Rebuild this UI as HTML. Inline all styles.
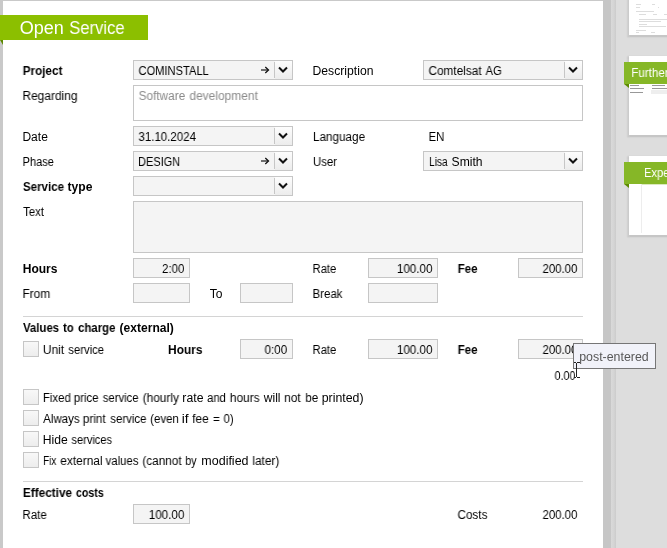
<!DOCTYPE html>
<html>
<head>
<meta charset="utf-8">
<title>Open Service</title>
<style>
html,body{margin:0;padding:0;}
body{width:667px;height:548px;overflow:hidden;position:relative;background:#dddddd;
 font-family:"Liberation Sans",sans-serif;font-size:12px;color:#000;}
.abs,.l,.f,.cb,.ta,.cmb,.line{position:absolute;}
.t{display:inline-block;white-space:nowrap;transform-origin:0 50%;will-change:transform;}
.t.r{transform-origin:100% 50%;}
#panel{position:absolute;left:3px;top:1px;width:600px;height:547px;background:#fff;}
#lstrip{position:absolute;left:0;top:0;width:3px;height:548px;background:#c9c9c9;}
#tstrip{position:absolute;left:0;top:0;width:603px;height:1px;background:#c9c9c9;}
#sb1{position:absolute;left:603px;top:0;width:8px;height:548px;background:#c6c6c6;}
#sb2{position:absolute;left:611px;top:0;width:5px;height:548px;background:linear-gradient(90deg,#d9d9d9,#d4d4d4 60%,#cbcbcb);}
#banner{position:absolute;left:0;top:15px;width:148px;height:25px;background:#8cbf00;}
#banner{line-height:27px;font-size:18px;color:#fff;padding-left:20px;box-sizing:border-box;white-space:nowrap;}
.l{height:20px;line-height:22px;white-space:nowrap;}
.b{font-weight:bold;color:#000;}
.f,.cmb,.ta{box-sizing:border-box;border:1px solid #c6c6c6;background:#f4f4f4;}
.f{height:20px;line-height:20px;text-align:right;padding-right:5px;}
.cmb{height:20px;line-height:20px;padding-left:5px;}
.cmb .sep{position:absolute;right:17px;top:1px;width:1px;height:16px;background:#c6c6c6;}
.cmb .btn{position:absolute;right:0;top:0;width:17px;height:18px;background:linear-gradient(#fdfdfd,#ececec);}
.cmb svg.ch{position:absolute;right:4px;top:5px;}
.cmb svg.ar{position:absolute;right:22px;top:5px;}
.ta{padding:2px 5px;line-height:16px;}
.cb{left:23px;width:16px;height:16px;box-sizing:border-box;border:1px solid #c6c6c6;background:linear-gradient(#f8f8f8,#ededed);}
.line{left:23px;width:560px;height:1px;background:#d4d4d4;}
.th{position:absolute;background:#fff;box-shadow:-1px 1px 1.5px 1.5px rgba(0,0,0,.1);}
.gb{position:absolute;left:624px;width:43px;height:22px;background:#86b727;color:#fff;line-height:22px;font-size:12.4px;white-space:nowrap;overflow:hidden;}
#further{margin-left:7px}#expe{margin-left:20px}
#tip{left:573px;top:343px;width:83px;height:26px;box-sizing:border-box;border:1px solid #767676;background:#f1f2f9;color:#575757;line-height:26px;padding-left:6px;white-space:nowrap;}
</style>
</head>
<body>
<div id="sb1"></div><div id="sb2"></div>
<div id="panel"></div>
<div id="lstrip"></div><div id="tstrip"></div>
<div id="banner"><span class="t" id="open0" style="transform:translateX(-0.31px) scaleX(1.0037)">Open</span> <span class="t" id="open1" style="transform:translateX(0.25px) scaleX(0.9223)">Service</span></div>
<svg class="abs" style="left:0;top:40px" width="3" height="5"><polygon points="0,0 3,0 3,5" fill="#5d8a00"/></svg>
<!-- right thumbnails -->
<div class="th" style="left:629px;top:-4px;width:42px;height:39px;"></div>
<svg class="abs" style="left:629px;top:0" width="38" height="35"><g fill="#9a9a9a" opacity=".33"><rect x="7" y="4" width="5" height="1"/><rect x="23" y="4" width="3" height="1"/><rect x="7" y="7" width="4" height="1"/><rect x="29" y="7" width="1" height="1"/><rect x="7" y="11" width="18" height="1"/><rect x="10" y="14" width="7" height="1"/><rect x="24" y="14" width="4" height="1"/><rect x="35" y="14" width="3" height="1"/><rect x="10" y="19" width="28" height="1"/><rect x="10" y="21" width="22" height="1"/><rect x="10" y="24" width="8" height="1"/><rect x="10" y="26" width="27" height="1"/><rect x="7" y="30" width="10" height="1"/><rect x="7" y="32" width="3" height="1"/><rect x="22" y="32" width="4" height="1"/></g></svg>
<div class="th" style="left:629px;top:56px;width:42px;height:79px;"></div>
<svg class="abs" style="left:629px;top:84px" width="38" height="12"><g fill="#555" opacity=".6"><rect x="1" y="1" width="9" height="1"/><rect x="23" y="1" width="13" height="1"/><rect x="1" y="4" width="14" height="1"/><rect x="23" y="4" width="15" height="1"/><rect x="1" y="8" width="13" height="1"/></g><rect x="22" y="6" width="16" height="4" fill="#eee"/></svg>
<div class="gb" style="top:62px;"><span class="t" id="further" style="transform:translateX(0.30px) scaleX(0.9350)">Further</span></div>
<svg class="abs" style="left:624px;top:84px" width="5" height="4"><polygon points="0,0 5,0 5,4" fill="#5d8a00"/></svg>
<div class="th" style="left:629px;top:156px;width:42px;height:79px;"></div>
<div class="abs" style="left:641px;top:184px;width:1px;height:49px;background:#ededed"></div>
<div class="abs" style="left:642px;top:184px;width:25px;height:1px;background:#dbe9bd"></div>
<div class="gb" style="top:162px;"><span class="t" id="expe" style="transform:translateX(0.00px) scaleX(0.9000)">Expe</span></div>
<svg class="abs" style="left:624px;top:184px" width="5" height="4"><polygon points="0,0 5,0 5,4" fill="#5d8a00"/></svg>
<div class="l b" style="left:23px;top:60px"><span class="t" id="project" style="transform:translateX(-0.29px) scaleX(0.9749)">Project</span></div>
<div class="cmb" style="left:133px;top:60px;width:160px;"><span class="t" id="cominstall" style="transform:translateX(-0.51px) scaleX(0.9273)">COMINSTALL</span><span class="btn"></span><span class="sep"></span><svg class="ar" width="10" height="9" viewBox="0 0 10 9"><path d="M1 4H8" stroke="#555" stroke-width="1.7" fill="none"/><path d="M5.3 1.1L8.5 4L5.3 6.9" stroke="#111" stroke-width="1.3" fill="none"/></svg><svg class="ch" width="10" height="8" viewBox="0 0 10 8"><path d="M1 1.5L5 5.5L9 1.5" stroke="#111" stroke-width="2" fill="none"/></svg></div>
<div class="l" style="left:313px;top:60px"><span class="t" id="description" style="transform:translateX(-0.47px) scaleX(1.0145)">Description</span></div>
<div class="cmb" style="left:423px;top:60px;width:160px;"><span class="t" id="comtelsat0" style="transform:translateX(-0.49px) scaleX(0.9813)">Comtelsat</span> <span class="t" id="comtelsat1" style="transform:translateX(-0.43px) scaleX(0.9334)">AG</span><span class="btn"></span><span class="sep"></span><svg class="ch" width="10" height="8" viewBox="0 0 10 8"><path d="M1 1.5L5 5.5L9 1.5" stroke="#111" stroke-width="2" fill="none"/></svg></div>
<div class="l" style="left:23px;top:85px"><span class="t" id="regarding" style="transform:translateX(-0.54px) scaleX(0.9944)">Regarding</span></div>
<div class="ta" style="left:133px;top:85px;width:450px;height:36px;background:#fff;color:#8a8a8a;"><span class="t" id="software0" style="transform:translateX(-0.39px) scaleX(0.9838)">Software</span> <span class="t" id="software1" style="transform:translateX(-0.55px) scaleX(0.9956)">development</span></div>
<div class="l" style="left:23px;top:126px"><span class="t" id="date" style="transform:translateX(-0.55px) scaleX(1.0001)">Date</span></div>
<div class="cmb" style="left:133px;top:126px;width:160px;"><span class="t" id="d3110" style="transform:translateX(-0.53px) scaleX(0.9569)">31.10.2024</span><span class="btn"></span><span class="sep"></span><svg class="ch" width="10" height="8" viewBox="0 0 10 8"><path d="M1 1.5L5 5.5L9 1.5" stroke="#111" stroke-width="2" fill="none"/></svg></div>
<div class="l" style="left:313px;top:126px"><span class="t" id="language" style="transform:translateX(-0.08px) scaleX(0.9777)">Language</span></div>
<div class="l" style="left:429px;top:126px"><span class="t" id="en" style="transform:translateX(-0.44px) scaleX(0.9424)">EN</span></div>
<div class="l" style="left:23px;top:151px"><span class="t" id="phase" style="transform:translateX(-0.48px) scaleX(0.9247)">Phase</span></div>
<div class="cmb" style="left:133px;top:151px;width:160px;"><span class="t" id="design" style="transform:translateX(-0.97px) scaleX(0.9149)">DESIGN</span><span class="btn"></span><span class="sep"></span><svg class="ar" width="10" height="9" viewBox="0 0 10 9"><path d="M1 4H8" stroke="#555" stroke-width="1.7" fill="none"/><path d="M5.3 1.1L8.5 4L5.3 6.9" stroke="#111" stroke-width="1.3" fill="none"/></svg><svg class="ch" width="10" height="8" viewBox="0 0 10 8"><path d="M1 1.5L5 5.5L9 1.5" stroke="#111" stroke-width="2" fill="none"/></svg></div>
<div class="l" style="left:313px;top:151px"><span class="t" id="user" style="transform:translateX(-0.05px) scaleX(0.9485)">User</span></div>
<div class="cmb" style="left:423px;top:151px;width:160px;"><span class="t" id="lisa0" style="transform:translateX(-0.00px) scaleX(0.8454)">Lisa</span> <span class="t" id="lisa1" style="transform:translateX(-2.40px) scaleX(1.0102)">Smith</span><span class="btn"></span><span class="sep"></span><svg class="ch" width="10" height="8" viewBox="0 0 10 8"><path d="M1 1.5L5 5.5L9 1.5" stroke="#111" stroke-width="2" fill="none"/></svg></div>
<div class="l b" style="left:23px;top:176px"><span class="t" id="servicetype0" style="transform:translateX(-0.09px) scaleX(0.9641)">Service</span></div><div class="l b" style="left:67px;top:176px"><span class="t" id="servicetype1" style="transform:translateX(0.60px) scaleX(1.0063)">type</span></div>
<div class="cmb" style="left:133px;top:176px;width:160px;"><span class="btn"></span><span class="sep"></span><svg class="ch" width="10" height="8" viewBox="0 0 10 8"><path d="M1 1.5L5 5.5L9 1.5" stroke="#111" stroke-width="2" fill="none"/></svg></div>
<div class="l" style="left:23px;top:201px"><span class="t" id="text" style="transform:translateX(0.16px) scaleX(0.9425)">Text</span></div>
<div class="ta" style="left:133px;top:201px;width:450px;height:52px;"></div>
<div class="l b" style="left:23px;top:258px"><span class="t" id="hours1" style="transform:translateX(-0.30px) scaleX(1.0015)">Hours</span></div>
<div class="f" style="left:133px;top:258px;width:57px;"><span class="t r" id="h200" style="transform:translateX(0.00px) scaleX(0.9578)">2:00</span></div>
<div class="l" style="left:313px;top:258px"><span class="t" id="rate1" style="transform:translateX(-0.44px) scaleX(0.9348)">Rate</span></div>
<div class="f" style="left:368px;top:258px;width:70px;"><span class="t r" id="r100a" style="transform:translateX(0.83px) scaleX(0.9717)">100.00</span></div>
<div class="l b" style="left:458px;top:258px"><span class="t" id="fee1" style="transform:translateX(-0.28px) scaleX(0.9592)">Fee</span></div>
<div class="f" style="left:518px;top:258px;width:65px;"><span class="t r" id="f200a" style="transform:translateX(0.71px) scaleX(0.9510)">200.00</span></div>
<div class="l" style="left:23px;top:283px"><span class="t" id="from" style="transform:translateX(-0.53px) scaleX(0.9924)">From</span></div>
<div class="f" style="left:133px;top:283px;width:57px;"></div>
<div class="l" style="left:210px;top:283px"><span class="t" id="to" style="transform:translateX(-0.30px) scaleX(1.0043)">To</span></div>
<div class="f" style="left:240px;top:283px;width:53px;"></div>
<div class="l" style="left:313px;top:283px"><span class="t" id="break" style="transform:translateX(-0.47px) scaleX(0.9571)">Break</span></div>
<div class="f" style="left:368px;top:283px;width:70px;"></div>
<div class="line" style="top:316px"></div>
<div class="l b" style="left:23px;top:317px"><span class="t" id="values0" style="transform:translateX(0.00px) scaleX(0.9494)">Values</span></div><div class="l b" style="left:63px;top:317px"><span class="t" id="values1" style="transform:translateX(0.10px) scaleX(0.9324)">to</span></div><div class="l b" style="left:78px;top:317px"><span class="t" id="values2" style="transform:translateX(0.02px) scaleX(0.9493)">charge</span></div><div class="l b" style="left:120px;top:317px"><span class="t" id="values3" style="transform:translateX(-0.40px) scaleX(1.0047)">(external)</span></div>
<div class="cb" style="top:341px"></div>
<div class="l" style="left:43px;top:339px"><span class="t" id="unit0" style="transform:translateX(-0.14px) scaleX(0.9952)">Unit</span></div><div class="l" style="left:68px;top:339px"><span class="t" id="unit1" style="transform:translateX(0.26px) scaleX(0.9424)">service</span></div>
<div class="l b" style="left:168px;top:339px"><span class="t" id="hours2" style="transform:translateX(0.01px) scaleX(0.9925)">Hours</span></div>
<div class="f" style="left:240px;top:339px;width:53px;"><span class="t r" id="h000" style="transform:translateX(-0.25px) scaleX(0.9667)">0:00</span></div>
<div class="l" style="left:313px;top:339px"><span class="t" id="rate2" style="transform:translateX(-0.44px) scaleX(0.9348)">Rate</span></div>
<div class="f" style="left:368px;top:339px;width:70px;"><span class="t r" id="r100b" style="transform:translateX(0.83px) scaleX(0.9717)">100.00</span></div>
<div class="l b" style="left:458px;top:339px"><span class="t" id="fee2" style="transform:translateX(-0.28px) scaleX(0.9592)">Fee</span></div>
<div class="f" style="left:518px;top:339px;width:65px;"><span class="t r" id="f200b" style="transform:translateX(0.71px) scaleX(0.9510)">200.00</span></div>
<div class="l" style="left:555px;top:365px"><span class="t" id="z000" style="transform:translateX(-0.44px) scaleX(0.8889)">0.00</span></div>
<div class="cb" style="top:389px"></div>
<div class="l" style="left:43px;top:387px"><span class="t" id="fixed0" style="transform:translateX(-0.10px) scaleX(0.9510)">Fixed</span></div><div class="l" style="left:74px;top:387px"><span class="t" id="fixed1" style="transform:translateX(-0.22px) scaleX(0.9536)">price</span></div><div class="l" style="left:103px;top:387px"><span class="t" id="fixed2" style="transform:translateX(-0.24px) scaleX(0.9424)">service</span></div><div class="l" style="left:143px;top:387px"><span class="t" id="fixed3" style="transform:translateX(-0.34px) scaleX(0.9889)">(hourly</span></div><div class="l" style="left:183px;top:387px"><span class="t" id="fixed4" style="transform:translateX(-0.66px) scaleX(1.0206)">rate</span></div><div class="l" style="left:207px;top:387px"><span class="t" id="fixed5" style="transform:translateX(0.04px) scaleX(0.9414)">and</span></div><div class="l" style="left:230px;top:387px"><span class="t" id="fixed6" style="transform:translateX(-0.20px) scaleX(0.9931)">hours</span></div><div class="l" style="left:263px;top:387px"><span class="t" id="fixed7" style="transform:translateX(0.85px) scaleX(1.0003)">will</span></div><div class="l" style="left:284px;top:387px"><span class="t" id="fixed8" style="transform:translateX(0.14px) scaleX(0.9969)">not</span></div><div class="l" style="left:306px;top:387px"><span class="t" id="fixed9" style="transform:translateX(-0.67px) scaleX(0.9627)">be</span></div><div class="l" style="left:322px;top:387px"><span class="t" id="fixed10" style="transform:translateX(-0.23px) scaleX(1.0269)">printed)</span></div>
<div class="cb" style="top:410px"></div>
<div class="l" style="left:43px;top:408px"><span class="t" id="always0" style="transform:translateX(0.15px) scaleX(0.9600)">Always</span></div><div class="l" style="left:83px;top:408px"><span class="t" id="always1" style="transform:translateX(-0.24px) scaleX(0.9823)">print</span></div><div class="l" style="left:110px;top:408px"><span class="t" id="always2" style="transform:translateX(0.26px) scaleX(0.9530)">service</span></div><div class="l" style="left:150px;top:408px"><span class="t" id="always3" style="transform:translateX(0.18px) scaleX(0.9544)">(even</span></div><div class="l" style="left:182px;top:408px"><span class="t" id="always4" style="transform:translateX(-0.26px) scaleX(1.1429)">if</span></div><div class="l" style="left:192px;top:408px"><span class="t" id="always5" style="transform:translateX(0.25px) scaleX(0.9907)">fee</span></div><div class="l" style="left:213px;top:408px"><span class="t" id="always6" style="transform:translateX(0.01px) scaleX(0.9759)">=</span></div><div class="l" style="left:224px;top:408px"><span class="t" id="always7" style="transform:translateX(-0.47px) scaleX(0.9474)">0)</span></div>
<div class="cb" style="top:431px"></div>
<div class="l" style="left:43px;top:429px"><span class="t" id="hide0" style="transform:translateX(-0.16px) scaleX(1.0130)">Hide</span></div><div class="l" style="left:71px;top:429px"><span class="t" id="hide1" style="transform:translateX(0.42px) scaleX(0.9237)">services</span></div>
<div class="cb" style="top:452px"></div>
<div class="l" style="left:43px;top:450px"><span class="t" id="fix0" style="transform:translateX(0.01px) scaleX(0.8309)">Fix</span></div><div class="l" style="left:60px;top:450px"><span class="t" id="fix1" style="transform:translateX(0.25px) scaleX(0.9917)">external</span></div><div class="l" style="left:105px;top:450px"><span class="t" id="fix2" style="transform:translateX(0.60px) scaleX(0.9475)">values</span></div><div class="l" style="left:143px;top:450px"><span class="t" id="fix3" style="transform:translateX(-0.63px) scaleX(0.9784)">(cannot</span></div><div class="l" style="left:186px;top:450px"><span class="t" id="fix4" style="transform:translateX(-0.66px) scaleX(0.8750)">by</span></div><div class="l" style="left:202px;top:450px"><span class="t" id="fix5" style="transform:translateX(-0.68px) scaleX(1.0412)">modified</span></div><div class="l" style="left:253px;top:450px"><span class="t" id="fix6" style="transform:translateX(-0.65px) scaleX(0.9905)">later)</span></div>
<div class="line" style="top:481px"></div>
<div class="l b" style="left:23px;top:482px"><span class="t" id="effective0" style="transform:translateX(-0.13px) scaleX(0.9847)">Effective</span></div><div class="l b" style="left:76px;top:482px"><span class="t" id="effective1" style="transform:translateX(-0.09px) scaleX(0.8853)">costs</span></div>
<div class="l" style="left:23px;top:504px"><span class="t" id="rate3" style="transform:translateX(-0.56px) scaleX(0.9580)">Rate</span></div>
<div class="f" style="left:133px;top:504px;width:57px;"><span class="t r" id="r100c" style="transform:translateX(0.72px) scaleX(0.9717)">100.00</span></div>
<div class="l" style="left:458px;top:504px"><span class="t" id="costs" style="transform:translateX(-0.49px) scaleX(0.9748)">Costs</span></div>
<div class="l" style="left:542px;top:504px"><span class="t" id="c200" style="transform:translateX(0.52px) scaleX(0.9510)">200.00</span></div>
<div class="abs" id="tip"><span class="t" id="post" style="transform:translateX(-0.80px) scaleX(1.0310)">post-entered</span></div>
<svg class="abs" id="cursor" style="left:572px;top:361px" width="9" height="19" viewBox="0 0 9 19"><path d="M2 1.5H4M5 1.5H8M4.5 2V16M2 16.5H4M5 16.5H8" stroke="#222" stroke-width="1" fill="none"/></svg>
</body>
</html>
